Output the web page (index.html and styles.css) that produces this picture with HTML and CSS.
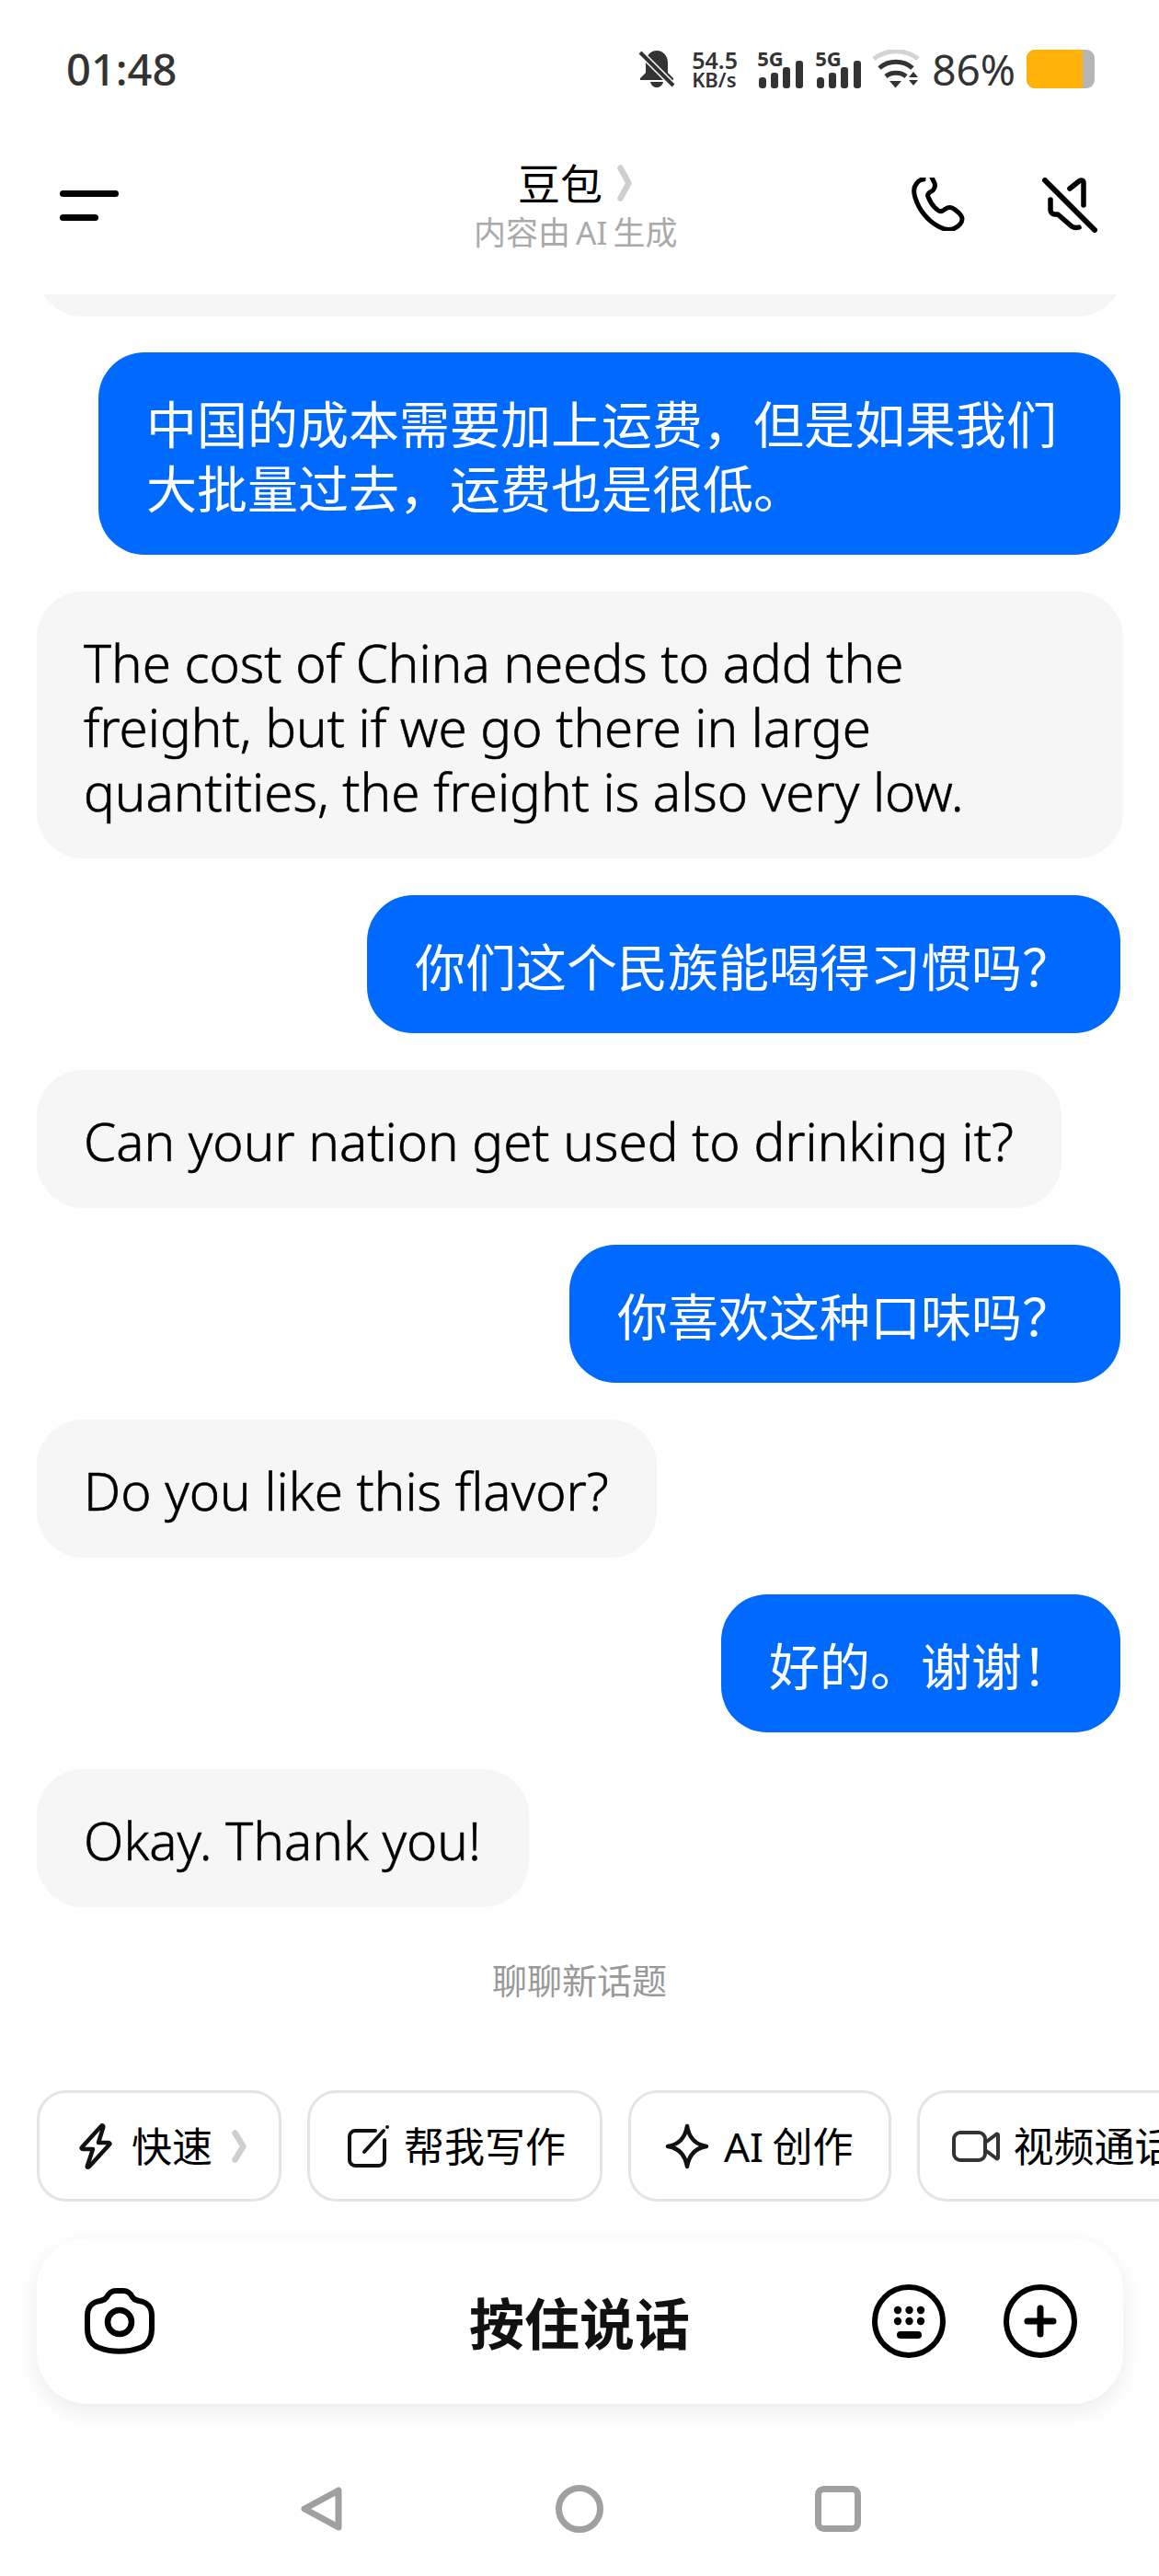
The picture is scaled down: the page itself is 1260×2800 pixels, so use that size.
FILE: index.html
```html
<!DOCTYPE html>
<html lang="zh-CN">
<head>
    <meta charset="UTF-8">
    <meta name="viewport" content="width=device-width, initial-scale=1.0">
    <title>豆包</title>
    <link rel="stylesheet" href="styles.css">
</head>
<body>
<div class="phone">
    <!-- Status bar -->
    <div class="status-bar">
        <span class="clock">01:48</span>
        <div class="status-icons">
            <svg class="bell" viewBox="0 0 40 42" width="40" height="42">
                <path d="M20 1c-7 0-12 6-12 13v11l-6 6v2h36v-2l-6-6V14C32 7 27 1 20 1z" fill="#333"/>
                <path d="M13 35h14c-1 4-4 6-7 6s-6-2-7-6z" fill="#333"/>
                <path d="M2 3l36 36" stroke="#fff" stroke-width="7"/>
                <path d="M2 3l36 36" stroke="#333" stroke-width="4"/>
            </svg>
            <div class="speed"><span>54.5</span><span class="unit">KB/s</span></div>
            <div class="signal">
                <span class="net">5G</span>
                <svg viewBox="0 0 48 30" width="48" height="30">
                    <rect x="0" y="18" width="8" height="12" rx="3.5" fill="#333"/>
                    <rect x="13" y="13" width="8" height="17" rx="3" fill="#333"/>
                    <rect x="26" y="7" width="8" height="23" rx="3" fill="#333"/>
                    <rect x="40" y="0" width="8" height="30" rx="3" fill="#333"/>
                </svg>
            </div>
            <div class="signal">
                <span class="net">5G</span>
                <svg viewBox="0 0 48 30" width="48" height="30">
                    <rect x="0" y="18" width="8" height="12" rx="3.5" fill="#333"/>
                    <rect x="13" y="13" width="8" height="17" rx="3" fill="#333"/>
                    <rect x="26" y="7" width="8" height="23" rx="3" fill="#333"/>
                    <rect x="40" y="0" width="8" height="30" rx="3" fill="#333"/>
                </svg>
            </div>
            <svg class="wifi" viewBox="0 0 52 42" width="52" height="42">
                <path d="M2 10C16 -1 36 -1 50 10" fill="none" stroke="#d4d4d4" stroke-width="5"/>
                <path d="M8 20C18 11 34 11 44 20" fill="none" stroke="#333" stroke-width="5"/>
                <path d="M15 29C21 24 31 24 37 29" fill="none" stroke="#333" stroke-width="5"/>
                <path d="M19 34h13l-6.500 7.500z" fill="#333"/>
                <path d="M40 30l5-6 5 6zM40 33h10l-5 6z" fill="#333"/>
            </svg>
            <span class="percent">86%</span>
            <div class="battery">
                <div class="battery-level"></div>
            </div>
        </div>
    </div>

    <!-- Header -->
    <div class="header">
        <div class="menu-btn"><span class="line-long"></span><span class="line-short"></span></div>
        <div class="title-box">
            <div class="title">豆包<svg class="chevron" viewBox="0 0 16 40" width="16" height="40"><path d="M3.500 3.500l9 16.500-9 16.500" fill="none" stroke="#cfcfcf" stroke-width="6.500" stroke-linecap="round" stroke-linejoin="round"/></svg></div>
            <div class="subtitle">内容由 AI 生成</div>
        </div>
        <div class="header-actions">
            <svg viewBox="0 0 58 58" width="58" height="58">
                <path d="M13 2c-3 0-6 2-8 5-3 4-3 9-1 15 4 13 14 26 27 32 6 3 12 3 16 1 4-2 8-6 8-10 0-3-2-5-4-7l-5-4c-3-2-6-2-9 0l-3 2c-2 1-4 1-6-1-4-3-8-9-10-14-1-2 0-4 2-5l3-2c2-2 3-5 2-8l-4-8c-2-3-4-5-8-4z" fill="none" stroke="#000" stroke-width="5" stroke-linejoin="round"/>
            </svg>
            <svg viewBox="0 0 60 60" width="60" height="60">
                <path d="M45 30V6c0-3-3-4-5-2l-10 8" fill="none" stroke="#000" stroke-width="5.500" stroke-linecap="round" stroke-linejoin="round"/>
                <path d="M9 24v11c0 3 2 5 5 5h3l15 13c3 2 5 2 8 1" fill="none" stroke="#000" stroke-width="5.500" stroke-linecap="round" stroke-linejoin="round"/>
                <path d="M3 3l54 54" stroke="#000" stroke-width="6" stroke-linecap="round"/>
            </svg>
        </div>
    </div>

    <!-- Chat -->
    <div class="chat">
        <div class="bubble-stub"><div class="stub-fill"></div></div>
        <div class="msg me">中国的成本需要加上运费，但是如果我们大批量过去，运费也是很低。</div>
        <div class="msg bot wide">The cost of China needs to add the freight, but if we go there in large quantities, the freight is also very low.</div>
        <div class="msg me">你们这个民族能喝得习惯吗？</div>
        <div class="msg bot">Can your nation get used to drinking it?</div>
        <div class="msg me">你喜欢这种口味吗？</div>
        <div class="msg bot">Do you like this flavor?</div>
        <div class="msg me">好的。谢谢！</div>
        <div class="msg bot">Okay. Thank you!</div>
        <div class="new-topic">聊聊新话题</div>
    </div>

    <!-- Quick chips -->
    <div class="chips">
        <div class="chip chip-fast">
            <svg viewBox="0 0 36 50" width="36" height="50"><path d="M24 3L3 26c-1 1 0 2 1 2h11L9 46c-1 2 1 2 2 1l22-24c1-1 0-2-1-2H21l5-16c1-3-1-3-2-2z" fill="none" stroke="#111" stroke-width="4.500" stroke-linejoin="round"/></svg>
            <span>快速</span>
            <svg viewBox="0 0 16 36" width="16" height="36"><path d="M3.500 3.500l9 14.500-9 14.500" fill="none" stroke="#cfcfcf" stroke-width="6.500" stroke-linecap="round" stroke-linejoin="round"/></svg>
        </div>
        <div class="chip chip-write">
            <svg viewBox="0 0 45 46" width="45" height="46"><path d="M30 6H8c-3 0-6 3-6 6v26c0 3 3 6 6 6h26c3 0 6-3 6-6V16" fill="none" stroke="#111" stroke-width="4" stroke-linecap="round"/><path d="M18 29L39 6" stroke="#111" stroke-width="4" stroke-linecap="round"/><circle cx="43" cy="2" r="2" fill="#111"/></svg>
            <span>帮我写作</span>
        </div>
        <div class="chip chip-ai">
            <svg viewBox="0 0 48 50" width="48" height="50"><path d="M24 3c2 12 8 20 21 22-13 2-19 10-21 22-2-12-8-20-21-22 13-2 19-10 21-22z" fill="none" stroke="#111" stroke-width="4.500" stroke-linejoin="round"/></svg>
            <span>AI 创作</span>
        </div>
        <div class="chip chip-video">
            <svg viewBox="0 0 52 36" width="52" height="36"><rect x="2" y="3" width="34" height="30" rx="7" fill="none" stroke="#333" stroke-width="4"/><path d="M36 14l12-9c1-1 2 0 2 1v24c0 1-1 2-2 1l-12-9z" fill="none" stroke="#333" stroke-width="4" stroke-linejoin="round"/></svg>
            <span>视频通话</span>
        </div>
    </div>

    <!-- Input bar -->
    <div class="input-bar">
        <svg viewBox="0 0 76 72" width="76" height="72">
            <path d="M24 10C26 6 29 3 34 3H42C47 3 50 6 52 10 54 13 56 13 59 14 68 15 73 21 73 30V44C73 55 69 62 60 65 47 70 29 70 16 65 7 62 3 55 3 44V30C3 21 8 15 17 14 20 13 22 13 24 10Z" fill="none" stroke="#000" stroke-width="6" stroke-linejoin="round"/>
            <circle cx="38" cy="37" r="13" fill="none" stroke="#000" stroke-width="6.500"/>
        </svg>
        <div class="hold-talk">按住说话</div>
        <div class="input-right">
            <svg viewBox="0 0 80 80" width="80" height="80">
                <circle cx="40" cy="40" r="37" fill="none" stroke="#000" stroke-width="6"/>
                <g fill="#000">
                    <circle cx="28" cy="28" r="4.200"/><circle cx="40.500" cy="28" r="4.200"/><circle cx="53" cy="28" r="4.200"/>
                    <circle cx="28" cy="40" r="4.200"/><circle cx="40.500" cy="40" r="4.200"/><circle cx="53" cy="40" r="4.200"/>
                    <rect x="27" y="51" width="27" height="8" rx="4"/>
                </g>
            </svg>
            <svg viewBox="0 0 80 80" width="80" height="80">
                <circle cx="40" cy="40" r="37" fill="none" stroke="#000" stroke-width="6"/>
                <path d="M40 26v28M26 40h28" stroke="#000" stroke-width="7" stroke-linecap="round"/>
            </svg>
        </div>
    </div>

    <!-- Navigation -->
    <div class="nav-bar">
        <svg viewBox="0 0 46 48" width="46" height="48"><path d="M41 4v40L4 24z" fill="none" stroke="#a0a0a0" stroke-width="7" stroke-linejoin="round"/></svg>
        <svg viewBox="0 0 52 52" width="52" height="52"><circle cx="26" cy="26" r="22.500" fill="none" stroke="#a0a0a0" stroke-width="7"/></svg>
        <svg viewBox="0 0 50 50" width="50" height="50"><rect x="3.500" y="3.500" width="43" height="43" rx="6" fill="none" stroke="#a0a0a0" stroke-width="7"/></svg>
    </div>
</div>
</body>
</html>
```

FILE: styles.css
```css
* {
    box-sizing: border-box;
}
body {
    margin: 0;
    background: #fff;
    font-family: "Noto Sans", "Noto Sans CJK SC", sans-serif;
    color: #111;
}
svg {
    display: block;
    flex-shrink: 0;
}
.phone {
    width: 1260px;
    height: 2800px;
    overflow: hidden;
}

/* Status bar */
.status-bar {
    height: 150px;
    padding: 50px 70px 0 72px;
    display: flex;
    justify-content: space-between;
    align-items: flex-start;
    color: #333;
}
.clock {
    font-size: 47px;
    font-weight: 500;
    line-height: 50px;
}
.status-icons {
    margin-top: 4px;
    display: flex;
    align-items: center;
    height: 42px;
}
.bell {
    margin-right: 18px;
}
.speed {
    width: 73px;
    display: flex;
    flex-direction: column;
    font-size: 25px;
    font-weight: 600;
    line-height: 22px;
}
.speed .unit {
    font-size: 22px;
    line-height: 20px;
}
.signal {
    position: relative;
    width: 48px;
    height: 42px;
    margin-right: 15px;
    display: flex;
    align-items: flex-end;
}
.signal + .signal {
    margin-right: 12px;
}
.net {
    position: absolute;
    left: -2px;
    top: -2px;
    font-size: 22px;
    font-weight: 700;
    line-height: 22px;
}
.percent {
    margin: 0 12px 0 13px;
    font-size: 46px;
    font-weight: 400;
    line-height: 42px;
}
.battery {
    width: 74px;
    height: 42px;
    border-radius: 9px;
    overflow: hidden;
    background: #b5b5b5;
}
.battery-level {
    width: 61px;
    height: 42px;
    background: #ffb30a;
}

/* Header */
.header {
    height: 170px;
    padding: 30px 67px 0 65px;
    display: flex;
    justify-content: space-between;
    align-items: flex-start;
    position: relative;
}
.menu-btn {
    margin-top: 27px;
    width: 64px;
    display: flex;
    flex-direction: column;
    gap: 19px;
}
.menu-btn span {
    display: block;
    height: 7px;
    border-radius: 4px;
    background: #000;
}
.line-short {
    width: 42px;
}
.title-box {
    position: absolute;
    left: 515px;
    top: 24px;
}
.title {
    padding-left: 48px;
    display: flex;
    align-items: center;
    gap: 16px;
    font-size: 46px;
    line-height: 50px;
    color: #000;
}
.subtitle {
    margin-top: 10px;
    font-size: 35px;
    line-height: 38px;
    word-spacing: -3px;
    color: #aaa;
    white-space: nowrap;
}
.header-actions {
    margin-top: 13px;
    display: flex;
    gap: 84px;
}

/* Chat */
.chat {
    height: 1950px;
    padding: 0 40px;
    display: flex;
    flex-direction: column;
    gap: 40px;
    align-items: flex-start;
}
.bubble-stub {
    width: 1181px;
    height: 24px;
    margin-bottom: -1px;
    display: flex;
    align-items: flex-end;
    overflow: hidden;
}
.stub-fill {
    flex-shrink: 0;
    width: 100%;
    height: 100px;
    background: #f6f6f6;
    border-radius: 50px;
}
.msg {
    padding: 43px 52px 37px;
    max-width: 1181px;
    border-radius: 50px;
    font-size: 55px;
    line-height: 70px;
}
.me {
    align-self: flex-end;
    margin-right: 2px;
    max-width: 1111px;
    background: #006aff;
    color: #fff;
}
.bot {
    padding-left: 51px;
    background: #f6f6f6;
    color: #000;
    font-weight: 300;
    font-size: 56.500px;
    -webkit-text-stroke: 0.6px #000;
}
.wide {
    width: 1181px;
}
.new-topic {
    align-self: center;
    margin-top: 16px;
    font-size: 38px;
    line-height: 46px;
    color: #999;
}

/* Chips */
.chips {
    height: 121px;
    margin-top: 2px;
    padding-left: 40px;
    display: flex;
    gap: 28px;
    overflow: hidden;
}
.chip {
    flex-shrink: 0;
    height: 121px;
    display: flex;
    align-items: center;
    border: 3px solid #e4e4e4;
    border-radius: 32px;
    font-size: 44px;
    color: #000;
    white-space: nowrap;
}
.chip span {
    margin-bottom: 4px;
}
.chip-fast {
    padding: 0 35px 0 43px;
    gap: 21px;
}
.chip-write {
    padding: 0 37px 0 41px;
    gap: 16px;
}
.chip-ai {
    padding: 0 39px 0 37px;
    gap: 16px;
    word-spacing: -2px;
}
.chip-video {
    padding: 0 38px 0 35px;
    gap: 14px;
}

/* Input bar */
.input-bar {
    width: 1181px;
    height: 180px;
    margin: 40px 0 0 40px;
    padding: 0 50px 0 52px;
    display: flex;
    align-items: center;
    justify-content: space-between;
    position: relative;
    background: #fff;
    border-radius: 55px;
    box-shadow: 0 8px 24px rgba(0, 0, 0, 0.08);
}
.hold-talk {
    position: absolute;
    left: 470px;
    font-size: 60px;
    font-weight: 700;
    color: #111;
}
.input-right {
    display: flex;
    gap: 63px;
}

/* Navigation */
.nav-bar {
    margin-top: 88px;
    padding: 0 324px 0 327px;
    display: flex;
    justify-content: space-between;
    align-items: center;
}
```
